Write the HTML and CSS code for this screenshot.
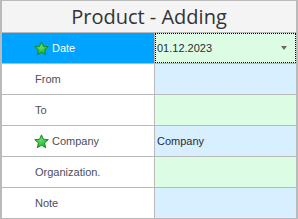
FILE: index.html
```html
<!DOCTYPE html>
<html>
<head>
<meta charset="utf-8">
<link rel="stylesheet" href="styles.css">
</head>
<body>
<div class="panel">
  <div class="title">Product - Adding</div>
  <div class="grid">
    <div class="label sel"><svg class="star" viewBox="0 0 14 14"><defs><radialGradient id="g" cx="0.45" cy="0.4" r="0.6"><stop offset="0" stop-color="#5fe06a"/><stop offset="1" stop-color="#1fae2c"/></radialGradient></defs><path d="M7 0.8 L8.8 4.9 L13.3 5.3 L9.9 8.3 L10.9 12.8 L7 10.4 L3.1 12.8 L4.1 8.3 L0.7 5.3 L5.2 4.9 Z" fill="url(#g)" stroke="#168a22" stroke-width="0.9" stroke-linejoin="round"/></svg><span>Date</span></div>
    <div class="value green"><div class="focus"><span>01.12.2023</span><span class="arrow"></span></div></div>
    <div class="label"><span class="plain">From</span></div>
    <div class="value blue"></div>
    <div class="label"><span class="plain">To</span></div>
    <div class="value green"></div>
    <div class="label"><svg class="star" viewBox="0 0 14 14"><path d="M7 0.8 L8.8 4.9 L13.3 5.3 L9.9 8.3 L10.9 12.8 L7 10.4 L3.1 12.8 L4.1 8.3 L0.7 5.3 L5.2 4.9 Z" fill="url(#g)" stroke="#168a22" stroke-width="0.9" stroke-linejoin="round"/></svg><span>Company</span></div>
    <div class="value blue"><span class="val">Company</span></div>
    <div class="label"><span class="plain">Organization.</span></div>
    <div class="value green"></div>
    <div class="label"><span class="plain">Note</span></div>
    <div class="value blue"></div>
  </div>
</div>
</body>
</html>
```
FILE: styles.css
```css
html, body { margin: 0; padding: 0; background: #fff; }
.panel {
  width: 298px;
  height: 219px;
  box-sizing: border-box;
  border: 2px solid #bababa;
  border-top-width: 1px;
  border-bottom-width: 0;
  display: flex;
  flex-direction: column;
  font-family: "Liberation Sans", Arial, sans-serif;
}
.title {
  height: 31px;
  border-bottom: 1px solid #bababa;
  background: #f4f4f4;
  color: #333;
  font-family: "Open Sans", sans-serif;
  font-size: 20px;
  line-height: 31px;
  text-align: center;
}
.grid {
  display: grid;
  grid-template-columns: 152px 1fr;
  grid-auto-rows: 31px;
}
.label, .value {
  box-sizing: border-box;
  border-bottom: 1px solid #bababa;
  display: flex;
  align-items: center;
  font-size: 11px;
}
.label {
  border-right: 1px solid #bababa;
  width: 153px;
  padding-left: 32px;
  color: #4d4d5c;
  background: #fff;
}
.label.sel { background: #00a3ff; color: #fff; }
.plain { margin-left: 1px; }
.star { width: 15px; height: 15px; margin-right: 3px; }
.value { margin-left: 1px; color: #2b2b3a; }
.green { background: #dcfce3; }
.blue { background: #d8efff; }
.focus {
  box-sizing: border-box;
  height: 100%;
  width: 100%;
  border: 1px dotted #000;
  display: flex;
  align-items: center;
  justify-content: space-between;
  padding-left: 1px;
  padding-right: 8px;
  color: #2b2b3a;
}
.arrow {
  width: 0; height: 0;
  border-left: 3.5px solid transparent;
  border-right: 3.5px solid transparent;
  border-top: 4px solid #6a6a6a;
}
.val { padding-left: 2px; }
```
